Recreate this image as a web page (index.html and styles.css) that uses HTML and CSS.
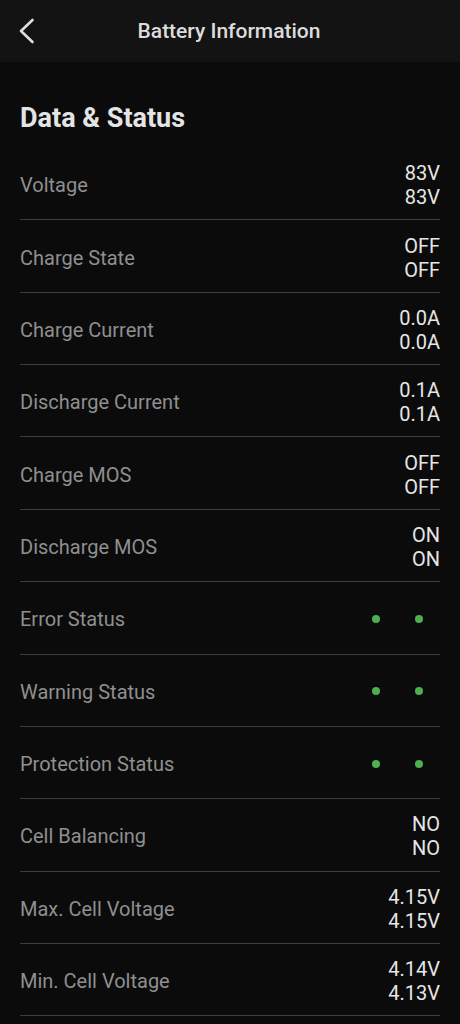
FILE: index.html
```html
<!DOCTYPE html>
<html lang="en">

<head>
    <meta charset="UTF-8">
    <meta name="viewport" content="width=device-width, initial-scale=1.0">
    <title>Battery Information</title>
    <link rel="stylesheet" href="styles.css">
</head>

<body>
    <div id="header">
        <span class="back">
            <svg width="16" height="26" viewBox="0 0 16 26">
                <polyline points="13.5,2 2,13 13.5,24" fill="none" stroke="#dedede" stroke-width="2.6" stroke-linecap="round" stroke-linejoin="round" />
            </svg>
        </span>
        <span class="title">Battery Information</span>
    </div>

    <div class="section">
        <h2 class="section-title">Data &amp; Status</h2>

        <div class="row">
            <div class="label">Voltage</div>
            <div class="values"><span>83V</span><span>83V</span></div>
        </div>
        <div class="row">
            <div class="label">Charge State</div>
            <div class="values"><span>OFF</span><span>OFF</span></div>
        </div>
        <div class="row">
            <div class="label">Charge Current</div>
            <div class="values"><span>0.0A</span><span>0.0A</span></div>
        </div>
        <div class="row">
            <div class="label">Discharge Current</div>
            <div class="values"><span>0.1A</span><span>0.1A</span></div>
        </div>
        <div class="row">
            <div class="label">Charge MOS</div>
            <div class="values"><span>OFF</span><span>OFF</span></div>
        </div>
        <div class="row">
            <div class="label">Discharge MOS</div>
            <div class="values"><span>ON</span><span>ON</span></div>
        </div>
        <div class="row">
            <div class="label">Error Status</div>
            <div class="dots"><i class="dot"></i><i class="dot"></i></div>
        </div>
        <div class="row">
            <div class="label">Warning Status</div>
            <div class="dots"><i class="dot"></i><i class="dot"></i></div>
        </div>
        <div class="row">
            <div class="label">Protection Status</div>
            <div class="dots"><i class="dot"></i><i class="dot"></i></div>
        </div>
        <div class="row">
            <div class="label">Cell Balancing</div>
            <div class="values"><span>NO</span><span>NO</span></div>
        </div>
        <div class="row">
            <div class="label">Max. Cell Voltage</div>
            <div class="values"><span>4.15V</span><span>4.15V</span></div>
        </div>
        <div class="row">
            <div class="label">Min. Cell Voltage</div>
            <div class="values"><span>4.14V</span><span>4.13V</span></div>
        </div>
    </div>
</body>

</html>
```
FILE: styles.css
```css
* {
    margin: 0;
    padding: 0;
    box-sizing: border-box;
}

html,
body {
    background-color: #0b0b0b;
    color: #e6e6e6;
    font-family: Roboto, "Noto Sans", sans-serif;
    height: 100%;
}

#header {
    position: relative;
    height: 62px;
    background-color: #131313;
    display: flex;
    align-items: center;
    justify-content: center;
}

/* back arrow sits over the header bar */
.back {
    position: absolute;
    left: 19px;
    top: 18px;
    display: flex;
}

.title {
    font-size: 21px;
    font-weight: 500;
    color: #dcdcdc;
    margin-left: -2px;
}

.section {
    padding: 0 20px;
}

.section-title {
    font-size: 27px;
    font-weight: 700;
    line-height: 32px;
    color: #e4e4e4;
    padding-top: 40px;
    margin-bottom: 14px;
}

.row {
    height: 72.36px;
    border-bottom: 1px solid #3b3e41;
    display: flex;
    align-items: center;
    justify-content: space-between;
}

.label {
    font-size: 20px;
    color: #8f8f8f;
    padding-top: 3px;
}

.values {
    display: flex;
    flex-direction: column;
    align-items: flex-end;
    font-size: 20px;
    line-height: 24px;
    color: #e6e6e6;
    padding-top: 3px;
}

.dots {
    display: flex;
    gap: 35px;
    padding-right: 17px;
    padding-top: 2px;
}

.dot {
    width: 8px;
    height: 8px;
    border-radius: 50%;
    background-color: #4caf50;
}
```
